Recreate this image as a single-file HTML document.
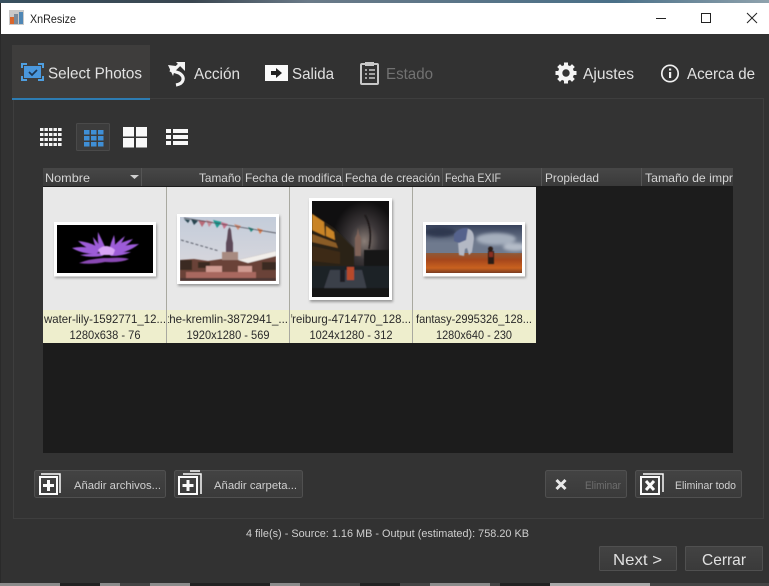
<!DOCTYPE html>
<html><head><meta charset="utf-8"><title>XnResize</title>
<style>html,body{margin:0;padding:0;background:#323232;width:769px;height:586px;overflow:hidden}svg{display:block}text{font-family:"Liberation Sans",sans-serif}</style></head>
<body>
<svg width="769" height="586" viewBox="0 0 769 586" xmlns="http://www.w3.org/2000/svg">
<defs>
<filter id="b" x="-5%" y="-5%" width="110%" height="110%"><feGaussianBlur stdDeviation="0.5"/></filter>
<filter id="b2" x="-20%" y="-20%" width="140%" height="140%"><feGaussianBlur stdDeviation="1.6"/></filter>
<filter id="s" x="-10%" y="-10%" width="120%" height="120%"><feGaussianBlur stdDeviation="1.2"/></filter>
<clipPath id="c1"><rect x="44" y="310" width="122" height="33"/></clipPath>
<clipPath id="c2"><rect x="168" y="310" width="121" height="33"/></clipPath>
<clipPath id="c3"><rect x="291" y="310" width="121" height="33"/></clipPath>
<clipPath id="c4"><rect x="413" y="310" width="122" height="33"/></clipPath>
<clipPath id="t3"><rect x="312" y="201" width="77" height="96"/></clipPath>
<clipPath id="t2"><rect x="180" y="217" width="96" height="64"/></clipPath>
<clipPath id="t4"><rect x="426" y="225" width="96" height="48"/></clipPath>
<linearGradient id="hd" x1="0" y1="0" x2="0" y2="1"><stop offset="0" stop-color="#474747"/><stop offset="1" stop-color="#3a3a3a"/></linearGradient>
<linearGradient id="btn" x1="0" y1="0" x2="0" y2="1"><stop offset="0" stop-color="#434343"/><stop offset="1" stop-color="#3a3a3a"/></linearGradient>
<linearGradient id="top" x1="0" y1="0" x2="1" y2="0"><stop offset="0" stop-color="#38505f"/><stop offset=".25" stop-color="#3a4650"/><stop offset=".4" stop-color="#6a7a88"/><stop offset=".8" stop-color="#4a7088"/><stop offset="1" stop-color="#8fa2ad"/></linearGradient>
<linearGradient id="sky2" x1="0" y1="0" x2="0" y2="1"><stop offset="0" stop-color="#c3ccda"/><stop offset=".7" stop-color="#d6d6dc"/><stop offset="1" stop-color="#c0b0aa"/></linearGradient>
<radialGradient id="sky3" cx=".68" cy=".42" r=".42"><stop offset="0" stop-color="#8a7d76"/><stop offset=".45" stop-color="#3d383a"/><stop offset="1" stop-color="#100f10"/></radialGradient>
<linearGradient id="sky4" x1="0" y1="0" x2="0" y2="1"><stop offset="0" stop-color="#39435c"/><stop offset=".6" stop-color="#6f7a8e"/></linearGradient>
<linearGradient id="gr4" x1="0" y1="0" x2="0" y2="1"><stop offset="0" stop-color="#8d5a3a"/><stop offset=".35" stop-color="#a6471c"/><stop offset=".75" stop-color="#c9621f"/><stop offset="1" stop-color="#7a3c22"/></linearGradient>
</defs>

<!-- desktop edges -->
<rect width="769" height="4" fill="url(#top)"/>
<rect y="583" width="769" height="3" fill="#444"/>
<path d="M0 583h60v3H0zM100 583h20v3h-20zM150 583h40v3h-40zM270 583h30v3h-30zM430 583h60v3h-60z" fill="#8a8a8a"/>
<path d="M550 583h100v3H550z" fill="#a8a8a8"/>
<path d="M60 583h40v3H60zM190 583h80v3h-80zM360 583h40v3h-40zM500 583h50v3h-50z" fill="#222"/>
<rect y="3" width="1" height="580" fill="#2a2a2a"/>

<!-- title bar -->
<rect x="1" y="3" width="768" height="31" fill="#fff"/>
<rect x="9" y="10" width="15" height="15" fill="#c9c9c9"/>
<rect x="10" y="17" width="4" height="7" fill="#d9662c"/><rect x="14" y="14" width="4" height="10" fill="#7a8a9a"/><rect x="19" y="12" width="4" height="12" fill="#4f87b5"/>
<text x="30" y="23" font-size="12" fill="#222" textLength="46" lengthAdjust="spacingAndGlyphs">XnResize</text>
<path d="M656 18.500h10" stroke="#222" stroke-width="1"/>
<rect x="701.500" y="13.500" width="9" height="9" fill="none" stroke="#222"/>
<path d="M747 13l10 10M757 13l-10 10" stroke="#222" stroke-width="1" fill="none"/>

<!-- main window bg -->
<rect x="1" y="34" width="768" height="549" fill="#323232"/>

<!-- panel -->
<rect x="13.500" y="98.500" width="750" height="420" fill="#333" stroke="#3e3e3e"/>

<!-- selected tab -->
<rect x="12" y="45" width="138" height="54" fill="#3e3d3c"/>
<rect x="12" y="98" width="138" height="2" fill="#2d7cb2"/>

<!-- tab icons -->
<g fill="none" stroke="#4f9fe0" stroke-width="2">
<path d="M22 68v-4h5M38 64h5v4M43 76v4h-5M27 80h-5v-4"/>
</g>
<rect x="24" y="66" width="17" height="12" fill="#4a97dc"/>
<path d="M29 72l3 3 5-5" fill="none" stroke="#1d3550" stroke-width="1.700"/>
<text x="48" y="78.500" font-size="16" fill="#e2e2e2" textLength="94" lengthAdjust="spacingAndGlyphs">Select Photos</text>

<path d="M170 70l9 3q5 3 4 7-1 4-7 5" fill="none" stroke="#f4f4f4" stroke-width="3.200"/>
<path d="M168 65l8 1-3 10z" fill="#f4f4f4"/>
<path d="M173 71l7-7" stroke="#f4f4f4" stroke-width="3.200"/>
<path d="M176 62h9v9z" fill="#f4f4f4"/>
<text x="194" y="79" font-size="16" fill="#e0e0e0" textLength="46" lengthAdjust="spacingAndGlyphs">Acción</text>

<rect x="265" y="65" width="23" height="16" fill="#fafafa"/>
<path d="M271 71h5v-3l6 5-6 5v-3h-5z" fill="#222"/>
<text x="292" y="79" font-size="16" fill="#e0e0e0" textLength="42" lengthAdjust="spacingAndGlyphs">Salida</text>

<rect x="361" y="64" width="17" height="20" rx="1" fill="none" stroke="#c8c8c8" stroke-width="2"/>
<rect x="365" y="62" width="9" height="4" fill="#c8c8c8"/>
<path d="M365 70h2M369 70h6M365 74h2M369 74h6M365 78h2M369 78h6" stroke="#c8c8c8" stroke-width="1.500"/>
<text x="386" y="79" font-size="16" fill="#727272" textLength="47" lengthAdjust="spacingAndGlyphs">Estado</text>

<circle cx="566" cy="73" r="8" fill="#f4f4f4"/>
<path d="M566 62.500v21M555.500 73h21M558.600 65.600l14.800 14.800M573.400 65.600l-14.800 14.800" stroke="#f4f4f4" stroke-width="4"/>
<circle cx="566" cy="73" r="3.700" fill="#323232"/>
<text x="583" y="79" font-size="16" fill="#e2e2e2" textLength="51" lengthAdjust="spacingAndGlyphs">Ajustes</text>

<circle cx="670" cy="73.500" r="8.200" fill="none" stroke="#f0f0f0" stroke-width="1.700"/>
<rect x="669" y="72" width="2.200" height="6" fill="#f0f0f0"/><rect x="669" y="68.500" width="2.200" height="2" fill="#f0f0f0"/>
<text x="687" y="79" font-size="16" fill="#e2e2e2" textLength="68" lengthAdjust="spacingAndGlyphs">Acerca de</text>

<!-- view buttons -->
<g fill="#f4f4f4">
<path d="M40 128h3.400v3H40zM44.500 128h3.400v3h-3.400zM49 128h3.400v3H49zM53.500 128h3.400v3h-3.400zM58 128h3.600v3H58zM40 133h3.400v3H40zM44.500 133h3.400v3h-3.400zM49 133h3.400v3H49zM53.500 133h3.400v3h-3.400zM58 133h3.600v3H58zM40 138h3.400v3H40zM44.500 138h3.400v3h-3.400zM49 138h3.400v3H49zM53.500 138h3.400v3h-3.400zM58 138h3.600v3H58zM40 143h3.400v3H40zM44.500 143h3.400v3h-3.400zM49 143h3.400v3H49zM53.500 143h3.400v3h-3.400zM58 143h3.600v3H58z"/>
</g>
<rect x="76.500" y="123.500" width="33" height="27" rx="1" fill="#3c3c3c" stroke="#4a4a4a"/>
<g fill="#3f8fd6">
<rect x="84" y="130" width="5.500" height="4.500"/><rect x="91" y="130" width="5.500" height="4.500"/><rect x="98" y="130" width="5.500" height="4.500"/>
<rect x="84" y="136" width="5.500" height="4.500"/><rect x="91" y="136" width="5.500" height="4.500"/><rect x="98" y="136" width="5.500" height="4.500"/>
<rect x="84" y="142" width="5.500" height="4.500"/><rect x="91" y="142" width="5.500" height="4.500"/><rect x="98" y="142" width="5.500" height="4.500"/>
</g>
<g fill="#f8f8f8">
<rect x="123" y="127" width="11" height="9.500"/><rect x="136" y="127" width="11" height="9.500"/>
<rect x="123" y="138" width="11" height="9.500"/><rect x="136" y="138" width="11" height="9.500"/>
<rect x="166" y="129" width="5" height="4"/><rect x="173" y="129" width="15" height="4"/>
<rect x="166" y="135" width="5" height="4"/><rect x="173" y="135" width="15" height="4"/>
<rect x="166" y="141" width="5" height="4"/><rect x="173" y="141" width="15" height="4"/>
</g>

<!-- list -->
<rect x="43" y="186" width="690" height="267" fill="#1c1c1c"/>
<rect x="43" y="168" width="690" height="18" fill="url(#hd)"/>
<path d="M141.500 168v18M242.500 168v18M342.500 168v18M442.500 168v18M541.500 168v18M641.500 168v18" stroke="#555"/>
<g font-size="12" fill="#d4d4d4">
<text x="45" y="182" textLength="45" lengthAdjust="spacingAndGlyphs">Nombre</text>
<path d="M130 175h9l-4.500 4z" fill="#cfcfcf"/>
<text x="199" y="182" textLength="42" lengthAdjust="spacingAndGlyphs">Tamaño</text>
<text x="245" y="182" textLength="97" lengthAdjust="spacingAndGlyphs">Fecha de modifica</text>
<text x="345" y="182" textLength="95" lengthAdjust="spacingAndGlyphs">Fecha de creación</text>
<text x="445" y="182" font-size="12" textLength="56" lengthAdjust="spacingAndGlyphs">Fecha EXIF</text>
<text x="545" y="182" textLength="54" lengthAdjust="spacingAndGlyphs">Propiedad</text>
<text x="645" y="182" textLength="88" lengthAdjust="spacingAndGlyphs">Tamaño de impr</text>
</g>

<!-- cells -->
<rect x="43" y="187" width="493" height="123" fill="#e8e8e8"/>
<rect x="43" y="310" width="493" height="33" fill="#eeeecd"/>
<path d="M166.500 187v156M289.500 187v156M412.500 187v156" stroke="#a9a9a0"/>

<!-- thumb shadows & frames -->
<g fill="#999" filter="url(#s)">
<rect x="55" y="224" width="102" height="54"/><rect x="178" y="216" width="102" height="70"/><rect x="310" y="200" width="83" height="102"/><rect x="424" y="224" width="102" height="54"/>
</g>
<g fill="#fff">
<rect x="54" y="222" width="102" height="54.500"/><rect x="177" y="214" width="102" height="70"/><rect x="309" y="198" width="83" height="102"/><rect x="423" y="222" width="102" height="54.500"/>
</g>

<!-- thumb 1: water lily -->
<rect x="57" y="225" width="96" height="48" fill="#000"/>
<g filter="url(#b)">
<g fill="#9d5bd8">
<path d="M72 248q14-3 28 3l-4 3q-14 0-24-6z"/>
<path d="M78 241q14 1 24 9l-5 2q-12-4-19-11z"/>
<path d="M139 244q-16 0-30 8l6 2q14-2 24-10z"/>
<path d="M133 239q-14 3-24 12l5 1q12-5 19-13z"/>
<path d="M93 237q5 6 10 13l-5 1q-4-6-5-14z"/>
<path d="M125 236q-8 6-15 14l5 1q6-6 10-15z"/>
<path d="M114 235q-3 7-5 15l5 1q2-8 0-16z"/>
<path d="M98 232q4 8 8 17h-6q-3-8-2-17z"/>
<path d="M80 255q14-2 28-2l-6 3q-12 2-22-1z"/>
<path d="M131 252q-12 0-24 1l4 3q12 0 20-4z"/>
</g>
<path d="M98 250q8-8 17 0l-2 5h-12z" fill="#d8a4f6"/>
<path d="M79 263q10-4 24-5l6 0q14-1 20 1-8 4-24 3-14 3-26 1z" fill="#8a48b4"/>
</g>

<!-- thumb 2: kremlin -->
<rect x="180" y="217" width="96" height="64" fill="url(#sky2)"/>
<g clip-path="url(#t2)">
<g filter="url(#b)">
<path d="M180 260l14-1 14 2 14-2 16 1 38-9v30h-96z" fill="#6b4238"/>
<path d="M180 260h12v10h-12zM198 262h12v6h-12zM262 262h14v8h-14z" fill="#3a2a20"/>
<path d="M226 259v-16l1-4 1-9 1.500-3 1.500 3 1 9 1 4v16z" fill="#5d4a58"/>
<path d="M222 260v-8h16v8z" fill="#a78a80"/>
<path d="M238 260l38-9v5l-28 7z" fill="#f1eeea"/>
<path d="M186 272h70v6h-70z" fill="#a8685e"/>
<path d="M206 266h16v6h-16zM238 266h14v6h-14z" fill="#cf9a90"/>
<path d="M180 278h96v3h-96z" fill="#4c3530"/>
<path d="M184 219l4 4 2-3zM191 219l3 6 4-4z" fill="#28444f"/>
<path d="M198 220l4 7 4-6z" fill="#b96a78"/><path d="M206 220l3 7 4-5z" fill="#c78a96"/>
<path d="M213 220l4 8 5-6z" fill="#1f9a90"/><path d="M221 222l3 7 4-5z" fill="#c56f88"/>
<path d="M234 224l4 6 3-4z" fill="#d08a70"/><path d="M248 227l3 5 3-3z" fill="#23887e"/><path d="M257 228l3 6 3-4z" fill="#e08050"/>
<path d="M181 240l38 11" stroke="#5b5f6a" stroke-width="1" stroke-dasharray="3 2" fill="none"/>
<path d="M184 218l92 15" stroke="#3a3d46" stroke-width=".7" fill="none"/>
</g>
</g>

<!-- thumb 3: freiburg -->
<rect x="312" y="201" width="77" height="96" fill="url(#sky3)"/>
<g clip-path="url(#t3)">
<g filter="url(#b)">
<path d="M312 213l22 15 20 20v22h-42z" fill="#2a2018"/>
<path d="M312 214l12 8 1 14-13-6zM326 226l8 6 1 8-9-4z" fill="#c98426"/>
<path d="M312 234l24 9 2 5-26-6z" fill="#8a5c26"/>
<path d="M312 246l28 6v12l-28-3z" fill="#3d2a18"/>
<path d="M355 256v-18l2-4 1-6 1 6 2 4v18z" fill="#806458"/>
<path d="M364 250h25v28h-25z" fill="#191817"/>
<path d="M365 215q8 14 4 34" stroke="#1a1616" stroke-width="1.500" fill="none"/>
<path d="M312 266h77v31h-77z" fill="#1e2026"/>
<path d="M330 270h32l6 24h-46z" fill="#3b3f48"/>
<rect x="347" y="267" width="7" height="13" fill="#b8492a"/>
<rect x="340" y="270" width="5" height="12" fill="#1c1c22"/>
<path d="M312 288h77v9h-77z" fill="#141416"/>
</g>
</g>

<!-- thumb 4: fantasy -->
<rect x="426" y="225" width="96" height="30" fill="url(#sky4)"/>
<rect x="426" y="253" width="96" height="20" fill="url(#gr4)"/>
<g clip-path="url(#t4)">
<g filter="url(#b2)"><ellipse cx="496" cy="239" rx="20" ry="6" fill="#a5afbd"/><ellipse cx="440" cy="232" rx="16" ry="5" fill="#2f3850"/><ellipse cx="515" cy="247" rx="12" ry="4" fill="#b4bcc8"/></g>
<g filter="url(#b)">
<path d="M454 237q6-10 15-8 5 2 5 10l-2 13-3 3-2-7-2 1-1 7-5-1-1-13-4-3z" fill="#b3b8c4"/>
<path d="M454 234q6-7 14-6l-2 12-7 3-5-2z" fill="#55628c"/>
<rect x="488" y="251" width="6" height="13" fill="#2a1a18"/><circle cx="490.500" cy="249" r="2.500" fill="#2a1a18"/>
<rect x="489" y="252" width="4" height="5" fill="#8a2e20"/>
</g>
</g>

<!-- captions -->
<g font-size="12" fill="#2a2a2a" text-anchor="middle">
<g clip-path="url(#c1)"><text x="105" y="323" textLength="122" lengthAdjust="spacingAndGlyphs">water-lily-1592771_12...</text></g>
<text x="105" y="339" textLength="71" lengthAdjust="spacingAndGlyphs">1280x638 - 76</text>
<g clip-path="url(#c2)"><text x="227" y="323" textLength="122" lengthAdjust="spacingAndGlyphs">the-kremlin-3872941_...</text></g>
<text x="228" y="339" textLength="83" lengthAdjust="spacingAndGlyphs">1920x1280 - 569</text>
<g clip-path="url(#c3)"><text x="350" y="323" textLength="122" lengthAdjust="spacingAndGlyphs">freiburg-4714770_128...</text></g>
<text x="351" y="339" textLength="83" lengthAdjust="spacingAndGlyphs">1024x1280 - 312</text>
<g clip-path="url(#c4)"><text x="474" y="323" textLength="116" lengthAdjust="spacingAndGlyphs">fantasy-2995326_128...</text></g>
<text x="474" y="339" textLength="76" lengthAdjust="spacingAndGlyphs">1280x640 - 230</text>
</g>

<!-- bottom buttons -->
<g fill="url(#btn)" stroke="#505050">
<rect x="34.500" y="470.500" width="131" height="27" rx="2"/>
<rect x="174.500" y="470.500" width="128" height="27" rx="2"/>
<rect x="545.500" y="470.500" width="81" height="27" rx="2"/>
<rect x="635.500" y="470.500" width="106" height="27" rx="2"/>
<rect x="599.500" y="546.500" width="77" height="24" rx="1"/>
<rect x="685.500" y="546.500" width="77" height="24" rx="1"/>
</g>
<g fill="none" stroke="#fafafa">
<path d="M41 474h19v19" stroke-width="1.500"/>
<rect x="40" y="477" width="17" height="17" stroke-width="2"/>
<path d="M183 474h18v20M190 471h10" stroke-width="1.500"/>
<rect x="179" y="477" width="18" height="17" stroke-width="2"/>
<path d="M643 474h20v18" stroke-width="1.500"/>
<rect x="641" y="477" width="18" height="17" stroke-width="2"/>
</g>
<path d="M48.500 480v11M43 485.500h11M188 480v11M182.500 485.500h11" stroke="#fafafa" stroke-width="3"/>
<path d="M646 481l8 9M654 481l-8 9" stroke="#fafafa" stroke-width="3"/>
<path d="M556.500 480l9 9M565.500 480l-9 9" stroke="#e8e8e8" stroke-width="3"/>
<g font-size="11" fill="#d0d0d0">
<text x="74" y="489" textLength="87" lengthAdjust="spacingAndGlyphs">Añadir archivos...</text>
<text x="214" y="489" textLength="83" lengthAdjust="spacingAndGlyphs">Añadir carpeta...</text>
<text x="585" y="489" textLength="36" lengthAdjust="spacingAndGlyphs" fill="#6e6e6e">Eliminar</text>
<text x="675" y="489" textLength="61" lengthAdjust="spacingAndGlyphs">Eliminar todo</text>
</g>

<text x="246" y="537" font-size="11" fill="#cfcfcf" textLength="283" lengthAdjust="spacingAndGlyphs">4 file(s) - Source: 1.16 MB - Output (estimated): 758.20 KB</text>

<text x="613" y="565" font-size="16" fill="#e0e0e0" textLength="49" lengthAdjust="spacingAndGlyphs">Next &gt;</text>
<text x="702" y="565" font-size="16" fill="#e0e0e0" textLength="44" lengthAdjust="spacingAndGlyphs">Cerrar</text>
</svg>
</body></html>
